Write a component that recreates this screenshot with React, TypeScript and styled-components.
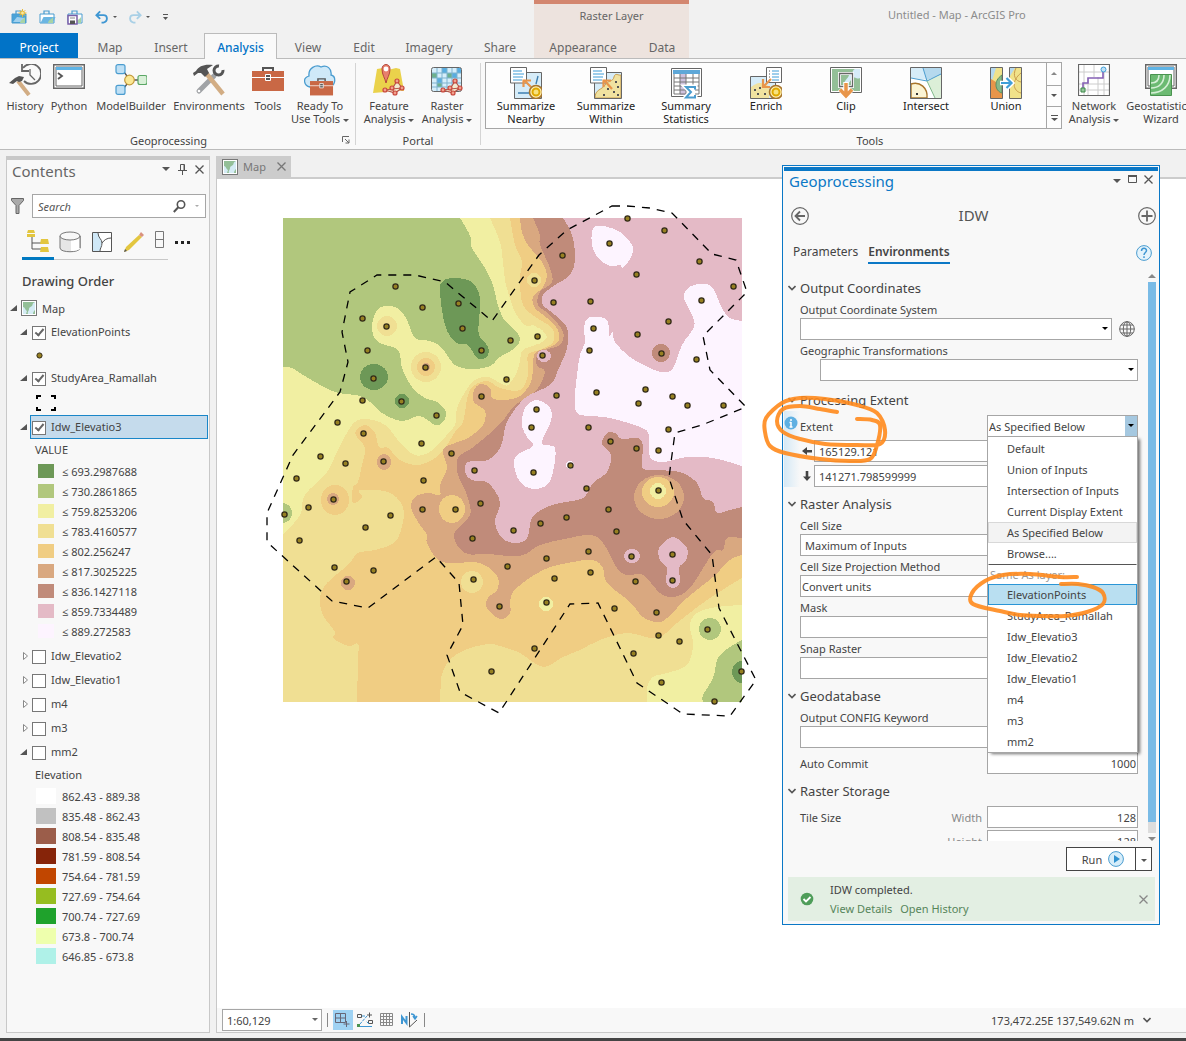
import React from "react";
import styled, { createGlobalStyle, css } from "styled-components";

const Global = createGlobalStyle`
  *, *::before, *::after { box-sizing: border-box; }
  body { margin: 0; background: #f1f1f1; }
  body, button, input, select { font-family: "Noto Sans", "Open Sans", sans-serif; font-size: 11px; color: #444; }
  button { border: 0; padding: 0; background: none; cursor: pointer; }
  ul { list-style: none; margin: 0; padding: 0; }
  h1, h2, h3 { margin: 0; font-weight: 400; }
  svg { display: block; flex: none; }
`;

/* ---------- shell ---------- */
const Page = styled.div`
  min-height: 100vh;
  display: flex;
  flex-direction: column;
  overflow: hidden;
  border-bottom: 3px solid #444;
`;
const Header = styled.header`
  display: flex;
  height: 58px;
`;
const HeaderLeft = styled.div`
  width: 534px;
  flex: none;
  display: flex;
  flex-direction: column;
`;
const QuickBar = styled.div`
  height: 33px;
  display: flex;
  align-items: center;
  gap: 11px;
  padding-left: 11px;
`;
const QuickButton = styled.button`
  display: flex;
  align-items: center;
  gap: 4px;
`;
const Tabs = styled.nav`
  display: flex;
  height: 25px;
`;
const Tab = styled.button<{ $w: number; $kind?: "file" | "active" }>`
  width: ${(p) => p.$w}px;
  flex: none;
  font-size: 12px;
  padding-top: 3px;
  color: #666;
  ${(p) => p.$kind === "file" && css`background: #0173c7; color: #fff;`}
  ${(p) =>
    p.$kind === "active" &&
    css`
      position: relative;
      margin: 0 0 -1px 4px;
      padding-top: 1px;
      background: #f9f9f9;
      color: #0173c7;
      border: 1px solid #bbb;
      border-bottom: 0;
      font-weight: 500;
    `}
`;
const Contextual = styled.div`
  width: 155px;
  flex: none;
  background: #ede3de;
  border-top: 4px solid #d3866f;
  text-align: center;
`;
const ContextTitle = styled.div`
  height: 29px;
  line-height: 24px;
  color: #666;
`;
const AppTitle = styled.h1`
  padding-left: 199px;
  font-size: 11px;
  line-height: 30px;
  color: #8c8c8c;
  white-space: nowrap;
`;

/* ---------- ribbon ---------- */
const Ribbon = styled.section`
  display: flex;
  height: 92px;
  background: #f9f9f9;
  border-top: 1px solid #bbb;
  border-bottom: 1px solid #bbb;
  overflow: hidden;
`;
const Group = styled.div<{ $w: number }>`
  flex: 0 0 ${(p) => p.$w}px;
  display: flex;
  flex-direction: column;
  justify-content: space-between;
`;
const GroupButtons = styled.div`
  display: flex;
  padding: 0 3px;
`;
const GroupLabel = styled.div`
  display: flex;
  align-items: center;
  height: 18px;
  span { flex: 1; text-align: center; }
  svg { margin: 0 5px; }
`;
const Divider = styled.i`
  flex: 0 0 1px;
  margin: 4px 0;
  background: #d4d4d4;
`;
const Tool = styled.button<{ $w: number }>`
  flex: 0 0 ${(p) => p.$w}px;
  display: flex;
  flex-direction: column;
  align-items: center;
  gap: 3px;
  padding-top: 5px;
  line-height: 13px;
  white-space: nowrap;
`;
const GalleryRow = styled.div`
  display: flex;
  padding-left: 4px;
`;
const Gallery = styled.div`
  display: flex;
  margin-top: 3px;
  height: 67px;
  border: 1px solid #a6a6a6;
  background: #fdfdfd;
`;
const GalleryItem = styled.button`
  width: 80px;
  display: flex;
  flex-direction: column;
  align-items: center;
  padding-top: 4px;
  line-height: 13px;
  color: #222;
`;
const GalleryScroll = styled.div`
  display: grid;
  grid-template-rows: repeat(3, 1fr);
  width: 15px;
  border-left: 1px solid #a6a6a6;
  button { display: grid; place-items: center; }
  button + button { border-top: 1px solid #a6a6a6; }
`;
const Caret = styled.i<{ $up?: boolean; $color?: string; $size?: number }>`
  display: inline-block;
  vertical-align: middle;
  border: ${(p) => p.$size ?? 3}px solid transparent;
  ${(p) => (p.$up ? "border-top: 0; border-bottom-color" : "border-bottom: 0; border-top-color")}: ${(p) => p.$color ?? "#555"};
`;

/* ---------- contents pane ---------- */
const Workspace = styled.main`
  position: relative;
  flex: 1;
  display: flex;
  gap: 6px;
  padding: 6px 0 5px 6px;
`;
const Contents = styled.aside`
  flex: 0 0 204px;
  min-width: 0;
  background: #f8f8f8;
  border: 1px solid #c8c8c8;
  border-top-width: 4px;
`;
const PaneHead = styled.div`
  display: flex;
  align-items: center;
  height: 24px;
  padding: 0 5px 2px;
  gap: 8px;
  h2 { flex: 1; font-size: 15px; color: #666; }
  button, svg, i { margin-top: -4px; }
  button svg { margin-top: 0; }
`;
const SearchRow = styled.div`
  display: flex;
  align-items: center;
  gap: 8px;
  padding: 10px 3px 0 4px;
`;
const SearchBox = styled.label`
  flex: 1;
  min-width: 0;
  display: flex;
  align-items: center;
  height: 24px;
  border: 1px solid #a6a6a6;
  background: #fff;
  padding: 0 6px 0 5px;
  gap: 9px;
  input {
    flex: 1;
    min-width: 0;
    border: 0;
    padding: 0;
    outline: 0;
    font-style: italic;
    background: none;
  }
  input::placeholder { color: #555; opacity: 1; }
`;
const ViewRow = styled.div`
  display: flex;
  margin-left: 15px;
  margin-top: 6px;
`;
const ViewButton = styled.button<{ $w: number; $on?: boolean; $plain?: boolean }>`
  flex: 0 0 ${(p) => p.$w}px;
  height: 36px;
  display: grid;
  place-items: center;
  border-bottom: ${(p) => (p.$on ? "3px solid #0079c1" : p.$plain ? "0" : "1px solid #c8c8c8")};
`;
const ListHead = styled.h3`
  padding: 12px 0 5px 15px;
  font-size: 13px;
  line-height: 19px;
  font-weight: 500;
`;
const LayerRow = styled.div<{ $top?: boolean; $selected?: boolean }>`
  display: flex;
  align-items: center;
  height: 24px;
  margin: 0 1px 0 ${(p) => (p.$top ? 3 : 13)}px;
  label {
    flex: 1;
    display: flex;
    align-items: center;
    gap: 5px;
    height: 24px;
    padding: 0 0 1px 1px;
    border: 1px solid ${(p) => (p.$selected ? "#1a86c8" : "transparent")};
    background: ${(p) => (p.$selected ? "#c5dbec" : "none")};
  }
`;
const Check = styled.input`
  appearance: none;
  flex: none;
  width: 14px;
  height: 14px;
  margin: 2px 0 0;
  border: 1px solid #777;
  background: #fff;
  display: grid;
  place-items: center;
  &:checked::before {
    content: "";
    width: 5px;
    height: 9px;
    margin-top: -2px;
    border: solid #666;
    border-width: 0 2px 2px 0;
    transform: rotate(40deg);
  }
`;
const MapRow = styled.div`
  display: flex;
  align-items: center;
  gap: 5px;
  padding-left: 1px;
`;
const SymbolRow = styled.div<{ $h: number }>`
  height: ${(p) => p.$h}px;
  padding-left: 29px;
  display: flex;
  align-items: center;
`;
const LegendTitle = styled.div`
  padding-left: 28px;
  line-height: 22px;
`;
const Legend = styled.ul`
  padding: 0 0 3px 29px;
`;
const LegendItem = styled.li<{ $c: string; $big?: boolean }>`
  display: flex;
  align-items: center;
  height: 20px;
  &::before {
    content: "";
    flex: none;
    width: ${(p) => (p.$big ? 20 : 16)}px;
    height: ${(p) => (p.$big ? 16 : 14)}px;
    margin: 0 ${(p) => (p.$big ? 6 : 8)}px 0 ${(p) => (p.$big ? 0 : 2)}px;
    background: ${(p) => p.$c};
  }
`;

/* ---------- map pane ---------- */
const MapPane = styled.section`
  flex: 1;
  min-width: 0;
  display: flex;
  flex-direction: column;
`;
const DocTab = styled.div`
  display: flex;
  align-items: center;
  gap: 5px;
  width: 75px;
  height: 21px;
  padding-left: 6px;
  background: #ccc;
  color: #777;
  span { flex: 1; }
  button { width: 20px; height: 20px; display: grid; place-items: center; }
`;
const MapView = styled.div`
  flex: 1;
  background: #fff;
  border-left: 1px solid #c8c8c8;
  border-top: 2px solid #ccc;
  padding: 21px 0 0 43px;
`;
const StatusBar = styled.footer`
  display: flex;
  align-items: center;
  height: 25px;
  gap: 5px;
  padding-left: 5px;
  background: #f8f8f8;
  border: solid #c8c8c8;
  border-width: 0 0 1px 1px;
`;
const StatusSep = styled.i`
  width: 1px;
  height: 14px;
  background: #888;
`;
const StatusIcon = styled.button<{ $on?: boolean }>`
  width: 20px;
  height: 20px;
  margin-right: -3px;
  display: grid;
  place-items: center;
  background: ${(p) => (p.$on ? "#9fd2f3" : "none")};
  & + i { margin-left: 3px; }
`;
const Coordinates = styled.span`
  margin-left: auto;
`;
const StatusChevron = styled.button`
  margin: 0 35px 0 4px;
`;

/* ---------- geoprocessing window ---------- */
const Floating = styled.section`
  position: absolute;
  top: 15px;
  right: 26px;
  width: 378px;
  padding: 1px;
  background: #f8f8f8;
  border: 1px solid #0b78c6;
  &::before { content: ""; display: block; height: 4px; background: #0b78c6; }
`;
const WindowHead = styled.div`
  display: flex;
  align-items: center;
  gap: 7px;
  height: 22px;
  padding: 0 5px 2px;
  h2 { flex: 1; font-size: 15px; color: #0b78c6; }
  button { margin-top: -4px; }
`;
const ToolHead = styled.div`
  display: flex;
  align-items: center;
  justify-content: space-between;
  height: 46px;
  padding: 0 2px 0 7px;
  h3 { font-size: 15px; line-height: 20px; padding-bottom: 2px; color: #555; }
`;
const ToolTabs = styled.div`
  display: flex;
  align-items: center;
  gap: 10px;
  height: 28px;
  padding: 0 6px 0 9px;
  button:last-child { margin-left: auto; }
`;
const ToolTab = styled.button<{ $on?: boolean }>`
  font-size: 12px;
  font-weight: ${(p) => (p.$on ? 600 : 400)};
  line-height: 20px;
  border-bottom: 2px solid ${(p) => (p.$on ? "#0b78c6" : "transparent")};
`;
const ScrollArea = styled.div`
  display: flex;
  height: 570px;
  margin-top: 4px;
  overflow: hidden;
`;
const Form = styled.form`
  flex: 1;
`;
const ScrollBar = styled.div`
  flex: 0 0 10px;
  margin: 3px 1px 0 9px;
  display: flex;
  flex-direction: column;
  align-items: center;
  gap: 4px;
`;
const ScrollTrack = styled.div`
  flex: 1;
  width: 8px;
  background: linear-gradient(#7abbe6 98%, #ddd 98%);
`;
const SectionTitle = styled.h3`
  display: flex;
  align-items: center;
  gap: 4px;
  height: 28px;
  padding: 6px 0 0 4px;
  font-size: 13px;
  line-height: 22px;
`;
const SectionBody = styled.div<{ $top?: number; $end?: number }>`
  padding: ${(p) => p.$top ?? 0}px 0 ${(p) => p.$end ?? 0}px 16px;
`;
const FieldLabel = styled.label`
  display: block;
  padding-top: 3px;
  line-height: 16px;
`;
const FieldRow = styled.div<{ $indent?: boolean }>`
  display: flex;
  align-items: center;
  gap: 7px;
  padding-left: ${(p) => (p.$indent ? 20 : 0)}px;
`;
const SelectWrap = styled.span<{ $w?: number; $plain?: boolean }>`
  position: relative;
  display: flex;
  flex: ${(p) => (p.$w ? `0 0 ${p.$w}px` : "1")};
  &::after {
    content: "";
    position: absolute;
    right: 4px;
    top: 9px;
    border: 3px solid transparent;
    border-top-color: ${(p) => (p.$plain ? "#666" : "#000")};
    pointer-events: none;
  }
`;
const Select = styled.select<{ $hot?: boolean; $pad?: number }>`
  appearance: none;
  flex: 1;
  width: 100%;
  height: 22px;
  padding: 0 16px 0 ${(p) => p.$pad ?? 1}px;
  border: 1px solid #a6a6a6;
  border-radius: 0;
  background: ${(p) => (p.$hot ? "linear-gradient(to left, #a5c8e0 12px, #fff 12px)" : "#fff")};
`;
const Input = styled.input<{ $w?: number; $right?: boolean }>`
  flex: ${(p) => (p.$w ? `0 0 ${p.$w}px` : "1")};
  min-width: 0;
  height: 22px;
  padding: 0 ${(p) => (p.$right ? 1 : 4)}px;
  border: 1px solid #a6a6a6;
  background: #fff;
  text-align: ${(p) => (p.$right ? "right" : "left")};
`;
const ExtentBlock = styled.div`
  display: flex;
  flex-direction: column;
  gap: 3px;
  padding: 4px 0 0 16px;
  background: linear-gradient(to right, #d5e9f6, #f8f8f8 16px);
`;
const ExtentRow = styled.div`
  position: relative;
  display: flex;
  align-items: center;
  justify-content: space-between;
  height: 22px;
`;
const InfoBadge = styled.span`
  position: absolute;
  left: -16px;
  top: 1px;
`;
const CoordRow = styled.label`
  display: flex;
  align-items: center;
  gap: 2px;
  width: 188px;
`;
const Popup = styled.ul`
  position: absolute;
  z-index: 2;
  top: 21px;
  right: 0;
  width: 151px;
  padding-top: 1px;
  background: #fff;
  border: 1px solid #a6a6a6;
  box-shadow: 3px 2px 3px -1px rgba(0, 0, 0, 0.55);
`;
const Option = styled.li<{ $kind?: "current" | "hover" | "caption" }>`
  height: 21px;
  line-height: 19px;
  padding-left: 18px;
  border: 1px solid transparent;
  ${(p) => p.$kind === "current" && css`background: #f3f3f3; border-color: #d8d8d8;`}
  ${(p) => p.$kind === "hover" && css`background: #b9dff1; border-color: #2a95d6;`}
  ${(p) => p.$kind === "caption" && css`height: 20px; padding-left: 1px; color: #999; border-top-color: #555;`}
`;
const InlineField = styled.div`
  display: flex;
  align-items: center;
  justify-content: space-between;
  margin-top: 4px;
`;
const SizeRow = styled.div`
  display: flex;
  align-items: center;
  margin-bottom: 2px;
  label { width: 84px; color: #888; text-align: right; padding-right: 5px; }
  span { flex: 1; }
`;
const RunRow = styled.div`
  display: flex;
  justify-content: flex-end;
  padding: 6px 6px;
`;
const RunButton = styled.button`
  width: 70px;
  height: 24px;
  display: flex;
  align-items: center;
  justify-content: center;
  gap: 6px;
  padding-left: 4px;
  border: 1px solid #444;
  background: #fff;
`;
const RunMore = styled.button`
  width: 17px;
  height: 24px;
  margin-left: -1px;
  border: 1px solid #444;
  background: #fff;
`;
const Message = styled.div`
  display: flex;
  align-items: center;
  gap: 16px;
  height: 44px;
  margin: 0 3px 2px 4px;
  padding: 0 7px 0 12px;
  background: #e3efe3;
  div { flex: 1; line-height: 19px; }
  a { color: #56855a; text-decoration: none; margin-right: 8px; }
`;
const Marks = styled.svg`
  position: absolute;
  z-index: 3;
  top: 226px;
  left: -25px;
  pointer-events: none;
`;

/* ---------- small icons ---------- */
const Close = ({ s = 9, c = "#555" }) => (
  <svg width={s} height={s} viewBox="0 0 9 9" stroke={c} strokeWidth="1.3"><path d="M.5.5l8 8M8.5.5l-8 8" /></svg>
);
const Twist = ({ open }: { open?: boolean }) => (
  <svg width="10" height="10" viewBox="0 0 10 10">
    {open ? <path d="M7 2v6H0z" fill="#555" /> : <path d="M3.500 1.500v7L7.500 5z" fill="#fff" stroke="#888" />}
  </svg>
);
const Chevron = () => (
  <svg width="8" height="8" viewBox="0 0 8 8" fill="none" stroke="#555" strokeWidth="1.6"><path d="M.5 2L4 5.5 7.5 2" /></svg>
);
const MapThumb = ({ s = 16 }) => (
  <svg width={s} height={s} viewBox="0 0 16 16">
    <rect x=".5" y=".5" width="15" height="15" fill="#fff" stroke="#777" />
    <path d="M2 2h12v12H2z" fill="#93bf97" />
    <path d="M14 2v8c-1 1-2 2-2 4H7c-1-2 1-3 1-5s2-2 3-3 0-3 3-4zM2 7c2 0 2 3 4 4l-1 3H2z" fill="#d5ecf5" />
  </svg>
);
const Folder = ({ kind }: { kind: "new" | "open" | "save" }) => (
  <svg width="17" height="16" viewBox="0 0 17 16">
    <path d="M5 5V2h5v3" fill="none" stroke="#4a9ccf" strokeWidth="1.200" />
    <path d="M1 5h14v9H1z" fill={kind === "new" ? "#4aa3d8" : "#fff"} stroke="#4a9ccf" />
    {kind === "open" && <path d="M1.500 14l3-6h12l-2.500 6z" fill="#6ab5e2" />}
    {kind === "new" && <path d="M2 13l4-5 8 1v4z" fill="#9fd0ee" />}
    <path d="M9 14c1-4 3-3 5-6v6z" fill="#a8d3a5" />
    {kind === "new" && (
      <g stroke="#e8b93a" fill="#fbe79a"><path d="M11.500 0v8M7.500 4h8M8.700 1.200l5.600 5.600M14.300 1.200L8.700 6.800" /><circle cx="11.500" cy="4" r="1.900" /></g>
    )}
    {kind === "save" && (
      <g><path d="M1 6.500h9v8.500H1z" fill="#fff" stroke="#7a5fa8" strokeWidth="1.500" /><path d="M3 11.500h5V15H3z" fill="#555" /><path d="M3 9h5" stroke="#888" /></g>
    )}
  </svg>
);
const Undo = ({ c, flip }: { c: string; flip?: boolean }) => (
  <svg width="14" height="14" viewBox="0 0 15 14" fill="none" stroke={c} strokeWidth="2">
    <path transform={flip ? "matrix(-1 0 0 1 15 0)" : undefined} d="M5.500 1L1.500 5l4 4M2 5h7c5 0 5 7 0 8H7" />
  </svg>
);

/* ---------- ribbon icons, 32 x 32 ---------- */
const Ico = ({ children }: { children: React.ReactNode }) => (
  <svg width="32" height="32" viewBox="0 0 32 32" fill="none">{children}</svg>
);
const toolbox = (
  <>
    <path d="M11 7V4h10v3" stroke="#555" strokeWidth="2" />
    <path d="M0 7h32v20H0z" fill="#c96845" />
    <path d="M0 13.500h32" stroke="#fff" />
    <path d="M13.500 10.500h5v6h-5z" fill="#555" stroke="#fff" /><path d="M14 13.500h4" stroke="#fff" />
  </>
);
const nodes = (
  <>
    <path d="M12 26l7-1 5-8 5 7-7 5zM19 25l10-1M19 25l3 4" fill="#f3ead0" stroke="#b5564a" strokeWidth="1.200" />
    {[[12, 26], [24, 17], [29, 24], [22, 29], [19, 24]].map(([x, cy]) => (
      <circle key={`${x}${cy}`} cx={x} cy={cy} r="2" fill="#f0a08c" stroke="#c9473c" strokeWidth="1.200" />
    ))}
  </>
);
const sheet = (
  <>
    <path d="M.5.500h16v15.500H.5z" fill="#fff" stroke="#666" />
    <path d="M3 4h9M3 7h11M3 10h10M3 13h9" stroke="#3f9ed8" strokeWidth="1.200" />
  </>
);
const ring = (
  <>
    <circle cx="26" cy="25" r="6.500" fill="#fff3b8" stroke="#a8752c" strokeWidth="1.600" />
    <circle cx="26" cy="25" r="3.500" fill="#f7e27d" stroke="#e0a800" strokeWidth="2" />
  </>
);
const icons: Record<string, React.ReactNode> = {
  history: (
    <>
      <path d="M14 4a10 10 0 1 1 1 13" stroke="#666" strokeWidth="1.800" /><path d="M21 5v6l5 5" stroke="#666" strokeWidth="1.300" />
      <path d="M13 0v7h7" stroke="#666" strokeWidth="1.800" />
      <path d="M9 17l11 14" stroke="#d2ad84" strokeWidth="4" /><path d="M0 19l6-5 4-2 5 1-2 4-3 1-2-1-4 3z" fill="#555" />
    </>
  ),
  python: (
    <>
      <path d="M.7.700h30.600v23.600H.7z" fill="#fff" stroke="#666" strokeWidth="1.400" />
      <path d="M3 3h26v19H3z" fill="#fff" stroke="#666" /><path d="M3 3h26v3H3z" fill="#5fb4e6" />
      <path d="M5 9l4 3-4 3" stroke="#555" strokeWidth="1.800" />
    </>
  ),
  model: (
    <>
      <path d="M9 8l6 8-6 8M15 16h9" stroke="#555" strokeWidth="1.300" />
      <rect x="1" y=".6" width="9" height="9" rx="2" fill="#bfe0f5" stroke="#4a9ccf" strokeWidth="1.200" />
      <rect x="1" y="21.400" width="9" height="9" rx="2" fill="#bfe0f5" stroke="#4a9ccf" strokeWidth="1.200" />
      <circle cx="14.500" cy="16" r="4.800" fill="#fbe894" stroke="#c49a3c" strokeWidth="1.200" />
      <rect x="23" y="11.500" width="9" height="9" rx="2" fill="#d9f0d8" stroke="#5aa765" strokeWidth="1.200" />
    </>
  ),
  env: (
    <>
      <path d="M21 12L6 27" stroke="#a0a3a6" strokeWidth="5" strokeLinecap="round" /><circle cx="6" cy="27" r="1.300" fill="#fff" />
      <path d="M30 6a4.500 4.500 0 1 1-4-4" stroke="#555" strokeWidth="3" />
      <path d="M13 9l17 21" stroke="#d2ad84" strokeWidth="4.500" />
      <path d="M0 9l3-2c3-5 8-7 17-6l-6 4 2 4-4 4-4-4-3 0-4 3z" fill="#555" />
    </>
  ),
  tools: toolbox,
  ready: (
    <>
      <path d="M6 23c-6-1-8-9-1-11C4 4 12 0 17 3c6-3 11 2 10 8 5 1 5 9 0 11z" fill="#cfe9f8" stroke="#4a9ccf" strokeWidth="1.300" />
      <g transform="translate(6 12) scale(.72)">{toolbox}</g>
    </>
  ),
  feature: (
    <>
      <path d="M4 5l6-1 5 2 8-2 4 1 4 22-10-1-9 2-12 1z" fill="#ead24b" />
      <path d="M9 5c0-6 8-6 8 0 0 6-3 9-4 14-1-5-4-8-4-14z" fill="#e8806c" stroke="#b5473c" /><circle cx="13" cy="5" r="2.400" fill="#fff" />
      {nodes}
    </>
  ),
  raster: (
    <>
      <rect x=".5" y="3.500" width="30" height="24" rx="2" fill="#d6eefb" />
      <path d="M1 9h5v5H1zM6 19h5v4H6zM16 9h5v5h-5z" fill="#6db08e" /><path d="M11 4h5v5h-5zM21 9h5v5h-5zM6 14h5v5H6zM26 4h4v5h-4z" fill="#58ade0" />
      <path d="M6 4v23M11 4v23M16 4v23M21 4v23M26 4v23M1 9h29M1 14h29M1 19h29M1 23h29" stroke="#7fb3cf" />
      <rect x=".5" y="3.500" width="30" height="24" rx="2" stroke="#666" />
      {nodes}
    </>
  ),
  nearby: (
    <>
      <path d="M4.500 5.500h27v26h-27z" fill="#d6ecf8" stroke="#666" /><path d="M28 9l-2 8M8 26h12" stroke="#3f7fb0" strokeWidth="1.400" />
      {sheet}<path d="M14 13l7 7M13.500 20v-6.500H21" stroke="#e8954a" strokeWidth="2.200" />{ring}
    </>
  ),
  within: (
    <>
      <path d="M4.500 5.500h27v26h-27z" fill="#d6ecf8" /><path d="M5 31c0-9 7-8 10-13s8-3 9-8 5-1 7-2v23z" fill="#f0e2a0" stroke="#c99c4e" /><path d="M4.500 5.500h27v26h-27z" stroke="#666" />
      <path d="M25 15h2M27 20h2M17 22h2M23 25h2M13 28h2M27 28h2" stroke="#555" strokeWidth="2" />
      {sheet}<path d="M14 13l8 9M13.500 20v-6.500H21" stroke="#e8954a" strokeWidth="2.200" />
    </>
  ),
  stats: (
    <>
      <path d="M1.500 1.500h30v28h-30z" fill="#fff" stroke="#666" /><path d="M3 3h27v4H3z" fill="#5fa8d8" /><path d="M10 7h6v21h-6z" fill="#cfc2df" />
      <path d="M4 7v20h25V7M10 7v20M16 7v20M23 7v20M4 11h25M4 15h25M4 19h25M4 23h25" stroke="#777" />
      <path d="M25 22v-2H16l5 5-5 5.500h9v-2" fill="#fff" stroke="#fff" strokeWidth="5" /><path d="M25 22.500v-2.500H16l5 5-5 5.500h9v-2.500" stroke="#4a9ccf" strokeWidth="2" />
    </>
  ),
  enrich: (
    <>
      <path d="M.5 9.500h25v22H.5z" fill="#d6ecf8" /><path d="M1 20c5-3 5-4 10-4 3 2 5 0 8 4v11H1z" fill="#f0e2a0" /><path d="M.5 9.500h25v22H.5z" stroke="#666" />
      <path d="M4 23h2M9 21h2M7 27h2M14 27h2" stroke="#555" strokeWidth="2" />
      <g transform="translate(16 0)"><path d="M.5.500h15v15H.5z" fill="#fff" stroke="#666" /><path d="M6 4h7M6 7h7M6 10h7M6 13h7" stroke="#3f9ed8" /><path d="M3 4h1M3 7h1M3 10h1M3 13h1" stroke="#555" /></g>
      <path d="M21 12l-7 7M13 12v8h7" stroke="#e8954a" strokeWidth="2.200" />{ring}
    </>
  ),
  clip: (
    <>
      <path d="M.5.500h31v25H.5z" fill="#fff" stroke="#666" /><path d="M2 2h28v22H2z" fill="#93bf97" /><path d="M30 2v9c-4 2-5-3-7 1-4 1-3 6-8 5-2-3 3-5 4-9 4 0 3-5 6-6z" fill="#d6ecf8" />
      <path d="M9.500 6.500h13v13h-13z" stroke="#fff" strokeWidth="3" /><path d="M9.500 6.500h13v13h-13z" stroke="#666" strokeWidth="1.300" />
      <path d="M16 15v14M10 22l6 6.500 6-6.500" stroke="#fff" strokeWidth="5.500" /><path d="M16 16v13M10 22.500l6 6.500 6-6.500" stroke="#e8954a" strokeWidth="3.500" />
    </>
  ),
  intersect: (
    <>
      <path d="M.5.500h31v31H.5z" fill="#fff" /><path d="M1 1h12l5 12L1 11z" fill="#d6ecf8" /><path d="M13 1h18v7l-14 5z" fill="#b5d9ee" /><path d="M31 8v23h-6l-8-18z" fill="#dcefd8" />
      <path d="M1 11l16 3 14-7M13 1l4 13" stroke="#4a9ccf" /><path d="M17 14l8 17" stroke="#7fb98a" />
      <path d="M1 17c9-3 17 4 16 14H1z" fill="#fbf4d4" stroke="#a8752c" strokeWidth="1.400" /><path d="M6 27h2" stroke="#333" strokeWidth="2" /><path d="M.5.500h31v31H.5z" stroke="#666" />
    </>
  ),
  union: (
    <>
      <path d="M.5.500h12v31H.5z" fill="#b5d9ee" /><path d="M6 1h6v11L1 17z" fill="#f0e28a" /><path d="M1 12l5 3 6 10v6H1z" fill="#e8954a" /><path d="M12 8v18C5 24 3 14 12 8z" fill="#86b88a" stroke="#5a9060" />
      <path d="M19.500.500h12v31h-12z" fill="#f0e28a" /><path d="M20 1h5l-5 8z" fill="#b5d9ee" /><path d="M26 1c-4 8 0 13 5 14M31 6c-10 8-8 18 0 20" stroke="#c99c4e" />
      <path d="M.5.500h12v31H.5zM19.500.500h12v31h-12z" stroke="#666" />
      <path d="M10 16h11M16.500 10.500L22 16l-5.500 5.500" stroke="#fff" strokeWidth="4.500" /><path d="M11 16h10M16.500 11l5 5-5 5" stroke="#3f9ed8" strokeWidth="2.200" />
    </>
  ),
  network: (
    <>
      <path d="M.5.500h31v31H.5z" fill="#fff" /><path d="M6 1v30M10 14v17M16 1v12M20 13v18M26 8v23M1 8h30M1 20h30M1 26h30" stroke="#ccc" />
      <path d="M.5.500h31v31H.5z" stroke="#666" strokeWidth="1.200" /><path d="M5 25v-6h5v-5h15V7" stroke="#8560b5" strokeWidth="1.600" />
      <circle cx="25.500" cy="5.500" r="2.500" fill="#bfe0f5" stroke="#3f9ed8" /><path d="M3 24h4v4H3z" fill="#93c79a" stroke="#3f8a4a" />
    </>
  ),
  geo: (
    <>
      <path d="M.7.700h30.600v23.600H.7z" fill="#fff" stroke="#666" strokeWidth="1.400" /><path d="M3 3h26v19H3z" stroke="#666" /><path d="M3 3h26v3H3z" fill="#5fb4e6" />
      <path d="M5.500 10.500h21v21h-21z" fill="#6cba72" stroke="#4a9350" />
      <path d="M14 11c0 5-3 8-8 8M19 11c0 8-5 13-13 13M25 11c0 11-8 18-19 18" stroke="#d5efd6" strokeWidth="1.600" />
    </>
  ),
};

/* ---------- interpolated surface ---------- */
const C = ["", "#6d9857", "#b1c77d", "#f1efa2", "#f0df93", "#f0cd83", "#d9a880", "#c08b7a", "#e4bac6", "#fdf4ff"];
type P = number[];
const parse = (s: string): P[] => s.trim().split(/\s+/).map((p) => p.split(",").map(Number));
const curve = (pts: P[], closed: boolean) => {
  const n = pts.length;
  const at = (i: number) => (closed ? pts[(i + n) % n] : pts[Math.max(0, Math.min(n - 1, i))]);
  let d = `M${pts[0]}`;
  for (let i = 0; i < (closed ? n : n - 1); i++) {
    const [a, b, c, e] = [at(i - 1), at(i), at(i + 1), at(i + 2)];
    d += `C${b[0] + (c[0] - a[0]) / 6},${b[1] + (c[1] - a[1]) / 6} ${c[0] - (e[0] - b[0]) / 6},${c[1] - (e[1] - b[1]) / 6} ${c[0]},${c[1]}`;
  }
  return d;
};
/* level, contour, corners that close it */
const regions: [number, string, string?][] = [
  [2, "460,218 466,228 471,238 472,248 485,268 493,285 497,302 503,318 513,328 520,338 515,348 500,357 490,366 472,369 455,365 442,348 430,341 415,338 407,320 399,309 388,306 377,310 372,328 378,342 398,350 402,368 412,387 425,398 437,402 446,412 443,422 435,425 420,416 402,421 382,413 363,397 335,392 308,378 292,368 283,367", "283,218"],
  [4, "490,218 500,242 503,262 505,280 508,292 515,312 525,325 535,326 547,337 535,345 523,350 520,360 517,372 508,385 500,383 488,377 475,380 465,392 457,408 455,425 442,440 428,453 415,455 402,445 385,425 365,419 352,425 337,452 327,472 305,495 300,515 283,535", "283,702 742,702 742,218"],
  [5, "510,218 515,245 522,262 520,278 523,305 537,318 552,328 553,342 540,350 528,355 528,375 520,390 500,388 488,381 475,385 468,395 463,422 455,432 442,452 428,462 416,465 400,460 388,448 379,447 375,433 365,425 355,433 365,448 362,465 358,482 353,487 352,500 355,503 362,497 360,490 388,492 402,505 403,522 395,542 375,550 358,553 348,565 327,583 320,598 323,615 335,632 333,638 348,646 358,644 358,660 357,702", "440,702 442,650 485,560 565,380 565,218"],
  [5, "440,702 439,685 448,662 465,650 488,644 500,646 520,653 543,667 563,657 580,650 600,640 627,633 657,638 677,623 700,605 727,587 742,578", "742,218 560,218 560,380 478,560 440,650"],
  [6, "520,218 522,232 528,245 542,262 547,275 543,287 533,297 535,308 547,318 558,330 558,342 547,348 535,353 533,366 531,382 520,396 505,400 492,398 490,388 481,384 474,390 474,402 485,411 483,425 468,438 455,443 443,450 447,468 440,485 440,495 428,493 415,497 411,507 418,522 427,535 427,543 438,560 455,563 475,562 488,567 498,578 497,590 488,598 487,608 500,619 510,613 513,592 543,570 573,562 593,560 603,568 607,583 630,602 643,617 657,622 667,618 687,598 713,577 730,560 742,555", "742,218"],
  [7, "533,218 540,235 540,245 550,268 552,282 540,292 538,305 550,315 563,332 560,345 545,350 537,356 537,366 545,372 535,392 515,405 502,422 488,435 472,448 458,458 458,475 467,495 470,515 455,532 457,545 468,554 488,554 520,556 540,545 565,539 590,535 603,543 617,568 627,575 643,575 660,593 673,597 690,588 713,553 723,550 727,538 742,538", "742,218"],
  [8, "563,218 572,235 575,258 570,275 555,285 543,295 543,305 555,315 567,328 567,348 558,370 550,385 525,398 507,422 501,446 488,460 468,462 465,472 472,480 488,483 500,502 495,522 502,538 515,543 527,538 532,518 545,508 560,503 583,498 593,483 607,472 611,455 602,444 607,433 615,433 622,439 638,438 643,447 642,467 653,470 680,472 697,483 703,498 713,502 717,513 730,510 742,507", "742,218"],
  [9, "742,321 730,318 722,308 712,287 700,284 688,288 684,298 692,315 694,327 682,345 673,368 663,372 650,368 630,357 615,342 613,332 609,336 608,322 600,317 588,318 584,328 585,342 580,355 577,375 575,395 577,413 592,416 610,418 640,427 649,435 650,457 663,462 687,457 713,458 742,466"],
  [3, "742,605 717,607 697,613 690,625 693,645 687,665 667,673 653,677 647,688 647,702", "742,702"],
  [2, "742,640 730,647 718,658 713,678 703,695 703,702", "742,702"],
];
const blobs: [number, string][] = [
  [1, "440,292 443,281 455,278 472,282 480,298 479,320 479,335 488,347 487,357 477,358 468,345 455,342 445,325"],
  [9, "592,245 593,228 603,226 620,232 632,245 632,255 623,268 620,265 610,266 598,258"],
  [9, "537,400 550,408 551,421 542,443 555,448 553,472 547,485 533,489 520,482 514,465 517,455 533,446 527,437 522,425 525,408"],
  [8, "673,537 687,548 686,560 679,568 680,582 673,588 666,582 667,568 660,560 659,548"],
];
/* level, cx, cy, rx, ry */
const discs: P[] = [
  [1, 374, 377, 14, 13], [1, 402, 401, 7, 7], [1, 742, 672, 10, 11], [2, 710, 629, 11, 11], [2, 283, 513, 9, 10],
  [4, 387, 326, 10, 10], [4, 426, 367, 15, 15], [5, 426, 367, 9, 9], [6, 426, 367, 4, 4], [5, 335, 500, 14, 15],
  [6, 333, 499, 6, 6], [6, 348, 583, 7, 7], [6, 384, 462, 7, 8], [5, 452, 509, 13, 14], [4, 472, 582, 11, 11],
  [4, 534, 280, 7, 7], [3, 537, 336, 8, 8], [8, 544, 356, 7, 6], [7, 661, 353, 9, 9], [6, 659, 497, 25, 22], [5, 658, 492, 16, 15],
  [3, 658, 491, 8, 8], [8, 632, 556, 8, 7], [3, 546, 604, 7, 7], [9, 570, 465, 4, 4],
];
const points = parse(`395,286 422,307 362,318 386,326 458,303 462,328 481,350 367,350 373,378 425,367 362,400 401,401 436,415
337,422 363,433 421,443 451,453 320,456 345,463 383,461 481,396 506,379 510,340 627,218 664,230 609,243 562,255 699,261
636,274 534,280 733,286 701,300 553,302 590,301 593,328 668,321 637,334 537,336 589,350 661,353 542,355 696,359 596,392
645,389 672,396 638,403 687,405 723,405 556,395 536,409 531,427 588,427 668,429 610,441 636,448 658,450 570,465 296,478
423,480 474,470 333,499 308,507 422,509 455,509 480,503 284,514 390,515 365,527 299,540 472,538 513,530 533,472 334,567
373,570 346,581 507,566 473,579 499,606 491,671 586,488 608,509 658,490 566,517 540,523 616,531 588,551 546,558 631,556
672,554 672,580 554,578 590,572 635,581 656,612 546,602 614,608 658,635 679,641 707,629 633,653 534,648 661,682 741,671 714,701`);
const boundary =
  "M612,206L627,206 650,208 672,213 712,254 736,260 747,292 703,336 710,370 746,407 702,425 675,433 671,462 669,478 683,520 712,555 719,608 742,653 756,680 730,716 683,714 637,683 598,603 570,604 499,713 460,692 447,655 463,625 459,583 436,557 368,608 332,601 267,542 267,513 293,455 340,392 348,362 342,332 350,292 377,275 415,275 445,282 492,321 539,255 567,230Z";

const Surface = () => (
  <svg width="500" height="522" viewBox="260 200 500 522" role="img" aria-label="Map">
    <defs><clipPath id="extent"><path d="M283 218H742V702H283z" /></clipPath></defs>
    <g clipPath="url(#extent)" shapeRendering="crispEdges">
      <path d="M283 218H742V702H283z" fill={C[3]} />
      {regions.map(([lv, pts, corners], i) => (
        <path key={i} fill={C[lv]} d={curve(parse(pts), false) + (corners ? `L${corners}` : "") + "Z"} />
      ))}
      {blobs.map(([lv, pts], i) => <path key={i} fill={C[lv]} d={curve(parse(pts), true) + "Z"} />)}
      {discs.map(([lv, cx, cy, rx, ry], i) => <ellipse key={i} fill={C[lv]} cx={cx} cy={cy} rx={rx} ry={ry} />)}
    </g>
    <path d={boundary} fill="none" stroke="#000" strokeWidth="1.3" strokeDasharray="8 7" />
    {points.map(([x, y], i) => <circle key={i} cx={x + 0.5} cy={y + 0.5} r="2.600" fill="#968021" stroke="#332b18" strokeWidth="1.300" />)}
  </svg>
);

/* ---------- data ---------- */
const geoTools: [string, number, string[], boolean?][] = [
  ["history", 44, ["History"]], ["python", 44, ["Python"]], ["model", 80, ["ModelBuilder"]],
  ["env", 76, ["Environments"]], ["tools", 42, ["Tools"]], ["ready", 62, ["Ready To", "Use Tools"], true],
];
const portalTools: typeof geoTools = [["feature", 60, ["Feature", "Analysis"], true], ["raster", 56, ["Raster", "Analysis"], true]];
const lastTools: typeof geoTools = [["network", 64, ["Network", "Analysis"], true], ["geo", 70, ["Geostatistical", "Wizard"]]];
const gallery: [string, string[]][] = [
  ["nearby", ["Summarize", "Nearby"]], ["within", ["Summarize", "Within"]], ["stats", ["Summary", "Statistics"]],
  ["enrich", ["Enrich"]], ["clip", ["Clip"]], ["intersect", ["Intersect"]], ["union", ["Union"]],
];
const valueLegend = ["693.2987688", "730.2861865", "759.8253206", "783.4160577", "802.256247", "817.3025225", "836.1427118", "859.7334489", "889.272583"];
const elevationLegend = [
  ["#ffffff", "862.43 - 889.38"], ["#c1c1c1", "835.48 - 862.43"], ["#9b5d4a", "808.54 - 835.48"], ["#862409", "781.59 - 808.54"],
  ["#c14600", "754.64 - 781.59"], ["#96bd20", "727.69 - 754.64"], ["#1fa22c", "700.74 - 727.69"], ["#eeffad", "673.8 - 700.74"], ["#aff1e8", "646.85 - 673.8"],
];

const ToolButtons = ({ items }: { items: typeof geoTools }) => (
  <>
    {items.map(([id, w, lines, more]) => (
      <Tool key={id} $w={w}>
        <Ico>{icons[id]}</Ico>
        <span>
          {lines[0]}
          {lines[1] && <><br />{lines[1]}</>}
          {more && <> <Caret /></>}
        </span>
      </Tool>
    ))}
  </>
);
const Layer = ({ name, open, checked, selected }: { name: string; open?: boolean; checked?: boolean; selected?: boolean }) => (
  <LayerRow $selected={selected}>
    <Twist open={open} />
    <label><Check type="checkbox" defaultChecked={checked} />{name}</label>
  </LayerRow>
);
const Section = ({ title }: { title: string }) => <SectionTitle><Chevron />{title}</SectionTitle>;
const Pick = ({ label, value = "", pad }: { label: string; value?: string; pad?: number }) => (
  <>
    <FieldLabel htmlFor={label}>{label}</FieldLabel>
    <SelectWrap><Select id={label} $pad={pad}><option>{value}</option></Select></SelectWrap>
  </>
);

export default function App() {
  return (
    <Page>
      <Global />
      <Header>
        <HeaderLeft>
          <QuickBar>
            <QuickButton aria-label="New"><Folder kind="new" /></QuickButton>
            <QuickButton aria-label="Open"><Folder kind="open" /></QuickButton>
            <QuickButton aria-label="Save"><Folder kind="save" /></QuickButton>
            <QuickButton aria-label="Undo"><Undo c="#3f97d3" /><Caret $size={2} /></QuickButton>
            <QuickButton aria-label="Redo"><Undo c="#a9d0e6" flip /><Caret $size={2} /></QuickButton>
            <QuickButton aria-label="Customize">
              <svg width="9" height="8" viewBox="0 0 9 8"><path d="M2 1.500h5" stroke="#555" /><path d="M2 4h5L4.500 7z" fill="#555" /></svg>
            </QuickButton>
          </QuickBar>
          <Tabs>
            <Tab $w={78} $kind="file">Project</Tab>
            <Tab $w={64}>Map</Tab>
            <Tab $w={58}>Insert</Tab>
            <Tab $w={73} $kind="active">Analysis</Tab>
            <Tab $w={62}>View</Tab>
            <Tab $w={50}>Edit</Tab>
            <Tab $w={80}>Imagery</Tab>
            <Tab $w={62}>Share</Tab>
          </Tabs>
        </HeaderLeft>
        <Contextual>
          <ContextTitle>Raster Layer</ContextTitle>
          <Tabs><Tab $w={98}>Appearance</Tab><Tab $w={60}>Data</Tab></Tabs>
        </Contextual>
        <AppTitle>Untitled - Map - ArcGIS Pro</AppTitle>
      </Header>

      <Ribbon>
        <Group $w={355}>
          <GroupButtons><ToolButtons items={geoTools} /></GroupButtons>
          <GroupLabel>
            <span>Geoprocessing</span>
            <svg width="8" height="8" viewBox="0 0 8 8" fill="none" stroke="#666"><path d="M.5 6V.5H7M3 3l4 4M7 3.500V7H3.500" /></svg>
          </GroupLabel>
        </Group>
        <Divider />
        <Group $w={124}>
          <GroupButtons><ToolButtons items={portalTools} /></GroupButtons>
          <GroupLabel><span>Portal</span></GroupLabel>
        </Group>
        <Divider />
        <Group $w={778}>
          <GalleryRow>
            <Gallery>
              {gallery.map(([id, lines]) => (
                <GalleryItem key={id}>
                  <Ico>{icons[id]}</Ico>
                  <span>{lines[0]}{lines[1] && <><br />{lines[1]}</>}</span>
                </GalleryItem>
              ))}
              <GalleryScroll>
                <button aria-label="Up"><Caret $up $color="#888" /></button>
                <button aria-label="Down"><Caret /></button>
                <button aria-label="More">
                  <svg width="7" height="8" viewBox="0 0 7 8"><path d="M0 1.500h7" stroke="#555" /><path d="M0 4h7L3.500 7z" fill="#555" /></svg>
                </button>
              </GalleryScroll>
            </Gallery>
            <ToolButtons items={lastTools} />
          </GalleryRow>
          <GroupLabel><span>Tools</span></GroupLabel>
        </Group>
      </Ribbon>

      <Workspace>
        <Contents>
          <PaneHead>
            <h2>Contents</h2>
            <Caret $size={4} />
            <svg width="9" height="11" viewBox="0 0 9 11" fill="none" stroke="#555"><path d="M2.500 6V.5h4V6M6 1v5M0 6.500h9M4.500 7v4" /></svg>
            <button aria-label="Close contents"><Close /></button>
          </PaneHead>
          <SearchRow>
            <svg width="13" height="16" viewBox="0 0 13 16"><path d="M.5.500h12v2l-4.500 5v8h-3v-8L.5 2.500z" fill="#aaa" stroke="#666" /></svg>
            <SearchBox>
              <input placeholder="Search" aria-label="Search" />
              <svg width="13" height="13" viewBox="0 0 13 13" fill="none" stroke="#555"><circle cx="8" cy="4.500" r="3.700" strokeWidth="1.600" /><path d="M5.300 7.200L.8 12" strokeWidth="2" /></svg>
              <Caret $size={2} $color="#aaa" />
            </SearchBox>
          </SearchRow>
          <ViewRow>
            <ViewButton $w={32} $on aria-label="List by drawing order">
              <svg width="22" height="22" viewBox="0 0 22 22"><path d="M5 7v12h9M5 13h9" fill="none" stroke="#555" /><path d="M1 0h6l1 3H0zM0 4h8v3H0zM14 9h7l1 5h-9zM14 17h7l1 5h-9z" fill="#e3c63f" /></svg>
            </ViewButton>
            <ViewButton $w={32} aria-label="List by data source">
              <svg width="22" height="22" viewBox="0 0 22 22"><path d="M1 5v12c0 5 20 5 20 0V5" fill="#e6e6e6" stroke="#777" /><path d="M12 8v12c5 0 9-1 9-3V5z" fill="#fff" /><ellipse cx="11" cy="5" rx="10" ry="4" fill="#f8f8f8" stroke="#777" /><path d="M21 5v12" stroke="#777" /></svg>
            </ViewButton>
            <ViewButton $w={32} aria-label="List by selection">
              <svg width="20" height="20" viewBox="0 0 20 20"><path d="M.5.500h19v19H.5z" fill="#fff" /><path d="M1 1h5l4 10-2 8H1z" fill="#cfe8f7" /><path d="M6 1c0 5 4 6 4 10s-2 5-2 8M10 11c2-3 5-5 9-5M.5.500h19v19H.5z" fill="none" stroke="#555" /></svg>
            </ViewButton>
            <ViewButton $w={32} aria-label="List by editing">
              <svg width="20" height="20" viewBox="0 0 20 20"><path d="M0 20l2-5L15 3l3 2L5 18z" fill="#e3c63f" /><path d="M15 3l2-3 3 3-2 2z" fill="#d9917f" /><path d="M0 20l1-3 2 2z" fill="#555" /></svg>
            </ViewButton>
            <ViewButton $w={18} aria-label="List by snapping">
              <svg width="9" height="22" viewBox="0 0 9 22" fill="none" stroke="#777"><path d="M.5.500h8v16h-8zM.5 8.500h8" /></svg>
            </ViewButton>
            <ViewButton $w={30} $plain aria-label="More views">
              <svg width="16" height="12" viewBox="0 0 16 12" fill="#222"><path d="M0 5h3v3H0zM6 5h3v3H6zM12 5h3v3h-3z" /></svg>
            </ViewButton>
          </ViewRow>
          <ListHead>Drawing Order</ListHead>
          <LayerRow $top><Twist open /><MapRow><MapThumb />Map</MapRow></LayerRow>
          <Layer name="ElevationPoints" open checked />
          <SymbolRow $h={22}><svg width="7" height="7" viewBox="0 0 7 7"><circle cx="3.500" cy="3.500" r="2.600" fill="#968021" stroke="#332b18" /></svg></SymbolRow>
          <Layer name="StudyArea_Ramallah" open checked />
          <SymbolRow $h={25}><svg width="20" height="16" viewBox="0 0 20 16" fill="none" stroke="#000" strokeWidth="2"><path d="M1 4V1h4M15 1h4v3M1 12v3h4M15 15h4v-3" /></svg></SymbolRow>
          <Layer name="Idw_Elevatio3" open checked selected />
          <LegendTitle>VALUE</LegendTitle>
          <Legend>{valueLegend.map((v, i) => <LegendItem key={v} $c={C[i + 1]}>≤ {v}</LegendItem>)}</Legend>
          <Layer name="Idw_Elevatio2" />
          <Layer name="Idw_Elevatio1" />
          <Layer name="m4" />
          <Layer name="m3" />
          <Layer name="mm2" open />
          <LegendTitle>Elevation</LegendTitle>
          <Legend>{elevationLegend.map(([c, v]) => <LegendItem key={v} $c={c} $big>{v}</LegendItem>)}</Legend>
        </Contents>

        <MapPane>
          <DocTab><MapThumb /><span>Map</span><button aria-label="Close map"><Close c="#777" /></button></DocTab>
          <MapView><Surface /></MapView>
          <StatusBar>
            <SelectWrap $w={100} $plain><Select aria-label="Scale" $pad={4}><option>1:60,129</option></Select></SelectWrap>
            <StatusSep />
            <StatusIcon $on aria-label="Snapping"><svg width="16" height="16" viewBox="0 0 16 16" fill="none" stroke="#667"><path d="M.5 1.500h10v9H.5zM5.500 1.500v9M.5 6h10M11.500 9v6M8.500 12h6" /></svg></StatusIcon>
            <StatusIcon aria-label="Constraints"><svg width="16" height="16" viewBox="0 0 16 16" fill="none" stroke="#555"><path d="M.5 2.500h4v3h-4zM11.500 8.500h4v3h-4zM10 3h5M12.500.500v5" /><path d="M3 12l7-8M5 4h3M12 12l-3-3" stroke="#3f97d3" strokeDasharray="3 1" /><path d="M0 14.500h15" stroke="#3f97d3" /><path d="M0 12h3v3H0z" fill="#4a9350" stroke="none" /></svg></StatusIcon>
            <StatusIcon aria-label="Grid"><svg width="14" height="14" viewBox="0 0 14 14" fill="none" stroke="#888"><path d="M.5.500h12v12H.5zM3.500 0v13M6.500 0v13M9.500 0v13M0 3.500h13M0 6.500h13M0 9.500h13" /></svg></StatusIcon>
            <StatusIcon aria-label="Inference"><svg width="17" height="16" viewBox="0 0 17 16" fill="none"><path d="M1 12V5l4.500 6V4" stroke="#3f97d3" strokeWidth="2" /><path d="M8.500 0v15L16 8" stroke="#555" /><path d="M10 2c3 0 4 1 4 4M12 4l2 3 2-3" stroke="#3f97d3" strokeWidth="1.500" /></svg></StatusIcon>
            <StatusSep />
            <Coordinates>173,472.25E 137,549.62N m</Coordinates>
            <StatusChevron aria-label="Coordinate format"><Chevron /></StatusChevron>
          </StatusBar>
        </MapPane>

        <Floating>
          <WindowHead>
            <h2>Geoprocessing</h2>
            <Caret $size={4} />
            <button aria-label="Maximize"><svg width="9" height="8" viewBox="0 0 9 8"><path d="M.5 1h8v6.500h-8z" fill="none" stroke="#555" /><path d="M0 0h9v2H0z" fill="#555" /></svg></button>
            <button aria-label="Close"><Close /></button>
          </WindowHead>
          <ToolHead>
            <button aria-label="Back"><svg width="18" height="18" viewBox="0 0 18 18" fill="none" stroke="#666"><circle cx="9" cy="9" r="8.300" strokeWidth="1.200" /><path d="M14 9H5M9 4.500L4.500 9 9 13.500" strokeWidth="1.800" /></svg></button>
            <h3>IDW</h3>
            <button aria-label="Add"><svg width="18" height="18" viewBox="0 0 18 18" fill="none" stroke="#666"><circle cx="9" cy="9" r="8.300" strokeWidth="1.200" /><path d="M3.500 9h11M9 3.500v11" strokeWidth="1.800" /></svg></button>
          </ToolHead>
          <ToolTabs>
            <ToolTab>Parameters</ToolTab>
            <ToolTab $on>Environments</ToolTab>
            <button aria-label="Help"><svg width="16" height="16" viewBox="0 0 16 16" fill="none"><circle cx="8" cy="8" r="7.400" fill="#e3f3fc" stroke="#4a9ccf" /><path d="M5.500 6c0-3.500 5-3.500 5-.5C10.500 7.500 8 7.500 8 10M8 11.300v1.700" stroke="#3f97d3" strokeWidth="1.500" /></svg></button>
          </ToolTabs>
          <ScrollArea>
            <Form onSubmit={(e) => e.preventDefault()}>
              <Section title="Output Coordinates" />
              <SectionBody $end={2}>
                <FieldLabel htmlFor="ocs">Output Coordinate System</FieldLabel>
                <FieldRow>
                  <SelectWrap><Select id="ocs"><option></option></Select></SelectWrap>
                  <button type="button" aria-label="Select coordinate system">
                    <svg width="19" height="16" viewBox="0 0 19 16" fill="none" stroke="#666"><circle cx="8" cy="8" r="7.300" /><ellipse cx="8" cy="8" rx="3.700" ry="7.300" /><path d="M8 .5v15M.5 8h15M2 4h12M2 12h12" /></svg>
                  </button>
                </FieldRow>
                <FieldLabel htmlFor="gt">Geographic Transformations</FieldLabel>
                <FieldRow $indent><SelectWrap><Select id="gt"><option></option></Select></SelectWrap></FieldRow>
              </SectionBody>
              <Section title="Processing Extent" />
              <ExtentBlock>
                <ExtentRow>
                  <InfoBadge><svg width="14" height="14" viewBox="0 0 14 14"><circle cx="7" cy="7" r="6.500" fill="#5fb0e2" /><path d="M7 3v2M7 6v5M5.500 6.500H7M5.500 11h3" stroke="#fff" strokeWidth="1.500" /></svg></InfoBadge>
                  <label htmlFor="extent-type">Extent</label>
                  <SelectWrap $w={151}><Select id="extent-type" $hot><option>As Specified Below</option></Select></SelectWrap>
                  <Popup role="listbox">
                    <Option>Default</Option>
                    <Option>Union of Inputs</Option>
                    <Option>Intersection of Inputs</Option>
                    <Option>Current Display Extent</Option>
                    <Option $kind="current">As Specified Below</Option>
                    <Option>Browse....</Option>
                    <Option $kind="caption">Same As layer:</Option>
                    <Option $kind="hover">ElevationPoints</Option>
                    <Option>StudyArea_Ramallah</Option>
                    <Option>Idw_Elevatio3</Option>
                    <Option>Idw_Elevatio2</Option>
                    <Option>Idw_Elevatio1</Option>
                    <Option>m4</Option>
                    <Option>m3</Option>
                    <Option>mm2</Option>
                  </Popup>
                </ExtentRow>
                <CoordRow>
                  <svg width="12" height="10" viewBox="0 0 12 10"><path d="M2 5l5-4v3h5v2.500H7V9z" fill="#444" /></svg>
                  <Input aria-label="Left" defaultValue="165129.121" />
                </CoordRow>
                <CoordRow>
                  <svg width="12" height="12" viewBox="0 0 12 12"><path d="M7 11L3 6.500h2.700V1h2.600v5.500H11z" fill="#444" /></svg>
                  <Input aria-label="Bottom" defaultValue="141271.798599999" />
                </CoordRow>
              </ExtentBlock>
              <Section title="Raster Analysis" />
              <SectionBody>
                <Pick label="Cell Size" value="Maximum of Inputs" pad={4} />
                <Pick label="Cell Size Projection Method" value="Convert units" />
                <Pick label="Mask" />
                <Pick label="Snap Raster" />
              </SectionBody>
              <Section title="Geodatabase" />
              <SectionBody>
                <Pick label="Output CONFIG Keyword" />
                <InlineField>
                  <label htmlFor="commit">Auto Commit</label>
                  <Input id="commit" $w={151} $right defaultValue="1000" />
                </InlineField>
              </SectionBody>
              <Section title="Raster Storage" />
              <SectionBody $top={4}>
                <SizeRow><span>Tile Size</span><label htmlFor="tw">Width</label><Input id="tw" $w={151} $right defaultValue="128" /></SizeRow>
                <SizeRow><span /><label htmlFor="th">Height</label><Input id="th" $w={151} $right defaultValue="128" /></SizeRow>
              </SectionBody>
            </Form>
            <ScrollBar><Caret $up $size={4} $color="#888" /><ScrollTrack /><Caret $size={4} $color="#888" /></ScrollBar>
          </ScrollArea>
          <RunRow>
            <RunButton>
              Run
              <svg width="16" height="16" viewBox="0 0 16 16"><circle cx="8" cy="8" r="7.400" fill="#d6edfa" stroke="#4a9ccf" /><path d="M6 4l6 4-6 4z" fill="#2f92d0" /></svg>
            </RunButton>
            <RunMore aria-label="Run options"><Caret /></RunMore>
          </RunRow>
          <Message>
            <svg width="14" height="14" viewBox="0 0 14 14"><circle cx="7" cy="7" r="6.300" fill="#4f9d5a" /><path d="M3.500 7l2.500 2.500L10.500 5" fill="none" stroke="#fff" strokeWidth="1.800" /></svg>
            <div>IDW completed.<br /><a href="#details">View Details</a><a href="#history">Open History</a></div>
            <button aria-label="Dismiss"><Close c="#888" /></button>
          </Message>
          <Marks width="360" height="230" viewBox="758 392 360 230" fill="none" stroke="#ff8a1c" strokeWidth="4" strokeLinecap="round" strokeOpacity=".9">
            <path d={curve(parse("837,412 820,409 800,406 783,409 777,421 783,432 800,439 825,444 857,445 880,444 885,430 877,413 857,405 825,399 800,398 782,403 766,418 765,432 770,446 785,453 820,459 850,461 870,459 877,445 880,425 872,420 857,419"), false)} />
            <path d={curve(parse("1077,577 1060,577 1030,574 1003,575 985,581 972,593 973,604 1000,611 1020,615 1043,616 1065,616 1087,612 1103,604 1103,593 1093,587 1078,584 1061,584"), false)} />
          </Marks>
        </Floating>
      </Workspace>
    </Page>
  );
}
